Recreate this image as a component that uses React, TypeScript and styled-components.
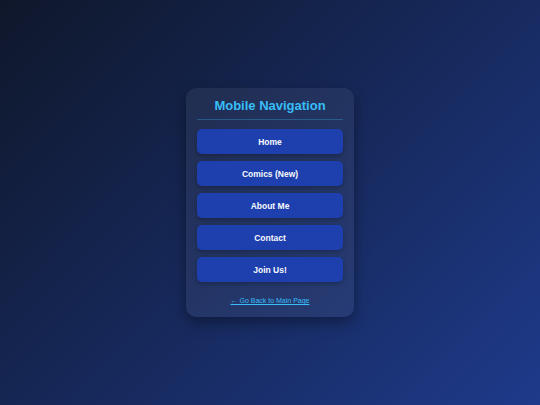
import React from "react";
import styled, { createGlobalStyle } from "styled-components";

const GlobalStyle = createGlobalStyle`
  html, body {
    margin: 0;
    padding: 0;
    height: 100%;
  }

  body {
    font-family: "Liberation Sans", Arial, sans-serif;
    background: linear-gradient(135deg, #0f172a 0%, #1e3a8a 100%);
  }

  #root {
    height: 100%;
  }
`;

const Page = styled.div`
  display: flex;
  align-items: center;
  justify-content: center;
  min-height: 405px;
  height: 100%;
`;

const Card = styled.nav`
  width: 168px;
  box-sizing: border-box;
  padding: 10px 11px 12px;
  background: rgba(255, 255, 255, 0.06);
  border-radius: 10px;
  box-shadow: 0 6px 14px rgba(0, 0, 0, 0.35);
  display: flex;
  flex-direction: column;
`;

const Title = styled.h1`
  margin: 0 0 9px;
  padding-bottom: 5px;
  font-size: 13px;
  line-height: 16px;
  font-weight: 700;
  text-align: center;
  color: #38bdf8;
  border-bottom: 1px solid rgba(56, 189, 248, 0.3);
`;

const Menu = styled.ul`
  list-style: none;
  margin: 0;
  padding: 0;
  display: flex;
  flex-direction: column;
  gap: 7px;
`;

const MenuButton = styled.a`
  display: flex;
  align-items: center;
  justify-content: center;
  height: 25px;
  border-radius: 5px;
  background: #1e40af;
  color: #f8fafc;
  font-size: 8.5px;
  font-weight: 700;
  text-decoration: none;
  box-shadow: 0 2px 4px rgba(0, 0, 0, 0.25);
`;

const BackLink = styled.a`
  margin-top: 14px;
  align-self: center;
  font-size: 7px;
  line-height: 9px;
  color: #38bdf8;
  text-decoration: underline;
`;

const items = ["Home", "Comics (New)", "About Me", "Contact", "Join Us!"];

const App = () => (
  <>
    <GlobalStyle />
    <Page>
      <Card>
        <Title>Mobile Navigation</Title>
        <Menu>
          {items.map((label) => (
            <li key={label}>
              <MenuButton href="#">{label}</MenuButton>
            </li>
          ))}
        </Menu>
        <BackLink href="#">← Go Back to Main Page</BackLink>
      </Card>
    </Page>
  </>
);

export default App;
